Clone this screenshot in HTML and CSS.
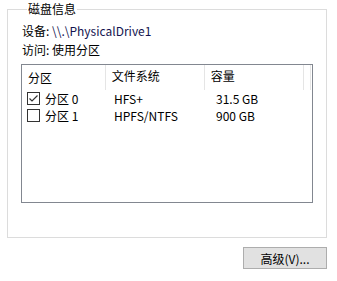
FILE: index.html
```html
<!DOCTYPE html>
<html lang="zh-CN">

<head>
    <meta charset="UTF-8">
    <title>磁盘信息</title>
    <link rel="stylesheet" href="styles.css">
</head>

<body>
    <div class="page">
        <fieldset class="group">
            <legend class="group-title">磁盘信息</legend>
            <div class="info-row">设备: <span class="path">\\.\PhysicalDrive1</span></div>
            <div class="info-row">访问: 使用分区</div>
            <div class="list">
                <div class="list-head">
                    <div class="col col-name">分区</div>
                    <div class="col col-fs">文件系统</div>
                    <div class="col col-size">容量</div>
                    <div class="col col-rest"></div>
                </div>
                <div class="list-row">
                    <div class="col col-name">
                        <span class="check checked">
                            <svg width="11" height="11" viewBox="0 0 11 11">
                                <path d="M1.5 5.5 L4 8 L9.5 2.5" fill="none" stroke="#333" stroke-width="1.2" />
                            </svg>
                        </span>
                        分区 0
                    </div>
                    <div class="col col-fs">HFS+</div>
                    <div class="col col-size">31.5 GB</div>
                </div>
                <div class="list-row">
                    <div class="col col-name"><span class="check"></span>分区 1</div>
                    <div class="col col-fs">HPFS/NTFS</div>
                    <div class="col col-size">900 GB</div>
                </div>
            </div>
        </fieldset>
        <div class="actions">
            <button class="btn">高级(V)...</button>
        </div>
    </div>
</body>

</html>
```

FILE: styles.css
```css
body {
    margin: 0;
    padding: 0;
    font-family: "Noto Sans CJK SC", "Noto Sans", sans-serif;
    font-size: 12px;
    color: #000;
    background-color: #fff;
}

.page {
    padding: 2px 10px 0 7px;
}

.group {
    margin: 0;
    width: 320px;
    height: 236px;
    box-sizing: border-box;
    border: 1px solid #dcdcdc;
    padding: 5px 13px 0 13px;
}

.group-title {
    padding: 0 1px;
    margin-left: 6px;
    line-height: 14px;
}

.info-row {
    height: 19px;
    line-height: 19px;
    padding-left: 1px;
}

.path {
    color: #141450;
}

.list {
    margin-top: 5px;
    width: 292px;
    height: 139px;
    box-sizing: border-box;
    border: 1px solid #828790;
}

.list-head {
    display: flex;
    height: 25px;
    line-height: 22px;
}

.list-head .col {
    border-right: 1px solid #e5e5e5;
}

.list-head .col-rest {
    flex: 1;
    margin-right: 1px;
}

.list-row {
    display: flex;
    height: 17px;
    line-height: 17px;
}

.col {
    box-sizing: border-box;
    padding-left: 6px;
    white-space: nowrap;
}

.col-name {
    width: 86px;
    display: flex;
    align-items: center;
}

.list-row .col-name {
    padding-left: 5px;
}

.col-fs {
    width: 102px;
}

.col-size {
    width: 102px;
}

.check {
    display: inline-flex;
    align-items: center;
    justify-content: center;
    width: 13px;
    height: 13px;
    box-sizing: border-box;
    border: 1px solid #333;
    margin-right: 5px;
}

.actions {
    display: flex;
    justify-content: flex-end;
    margin-top: 9px;
    padding-right: 0;
}

.btn {
    width: 84px;
    height: 22px;
    margin-right: 0;
    background-color: #e1e1e1;
    border: 1px solid #adadad;
    font-family: inherit;
    font-size: 12px;
    color: #000;
    padding: 0;
}
```
